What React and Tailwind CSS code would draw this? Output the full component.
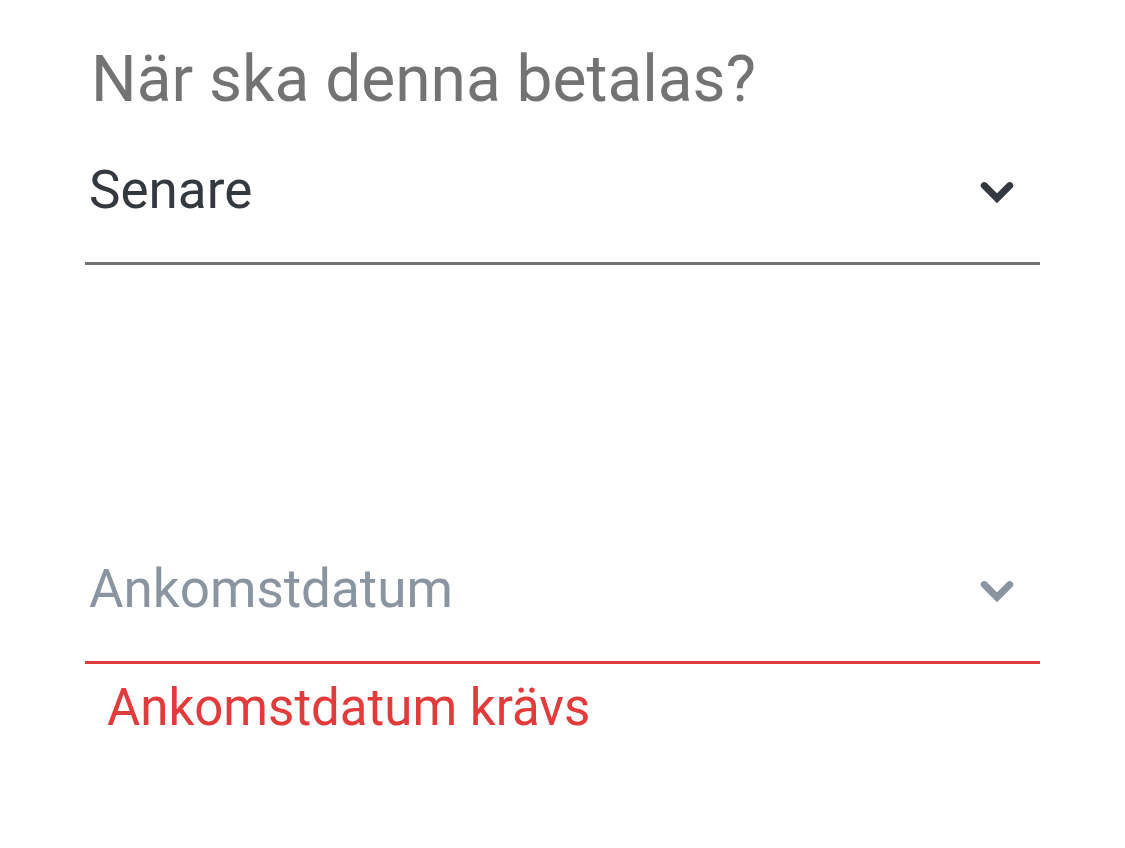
import React from 'react';

function Chevron({ className }) {
    return (
        <svg viewBox="0 0 32 22" className={className} fill="none">
            <path d="M4 4 L16 16 L28 4" stroke="currentColor" strokeWidth="6.5" strokeLinecap="round" strokeLinejoin="miter" />
        </svg>
    );
}

function SelectField({ value, placeholder, error }) {
    return (
        <div className="flex flex-col">
            <div className={`flex items-center justify-between h-[153px] pt-[6px] pl-1 pr-[26px] border-b-[3px] ${error ? 'border-[#e23b3b]' : 'border-[#737373]'}`}>
                <span className={`text-[53px] leading-none ${value ? 'text-[#33393f]' : 'text-[#8a95a1]'}`}>
                    {value || placeholder}
                </span>
                <Chevron className={`w-[34px] h-[24px] mt-[6px] ${value ? 'text-[#33393f]' : 'text-[#8a95a1]'}`} />
            </div>
            {error && (
                <p className="pl-[22px] pt-[18px] text-[51px] leading-none text-[#e23b3b]">{error}</p>
            )}
        </div>
    );
}

export default function App() {
    return (
        <div className="min-h-[848px] bg-white font-['Roboto',sans-serif]">
            <div className="w-[955px] ml-[85px] pt-[48px]">
                <h2 className="pl-[6px] text-[64px] leading-[64px] text-[#737373]">När ska denna betalas?</h2>
                <SelectField value="Senare" />
                <div className="h-[246px]" />
                <SelectField placeholder="Ankomstdatum" error="Ankomstdatum krävs" />
            </div>
        </div>
    );
}
